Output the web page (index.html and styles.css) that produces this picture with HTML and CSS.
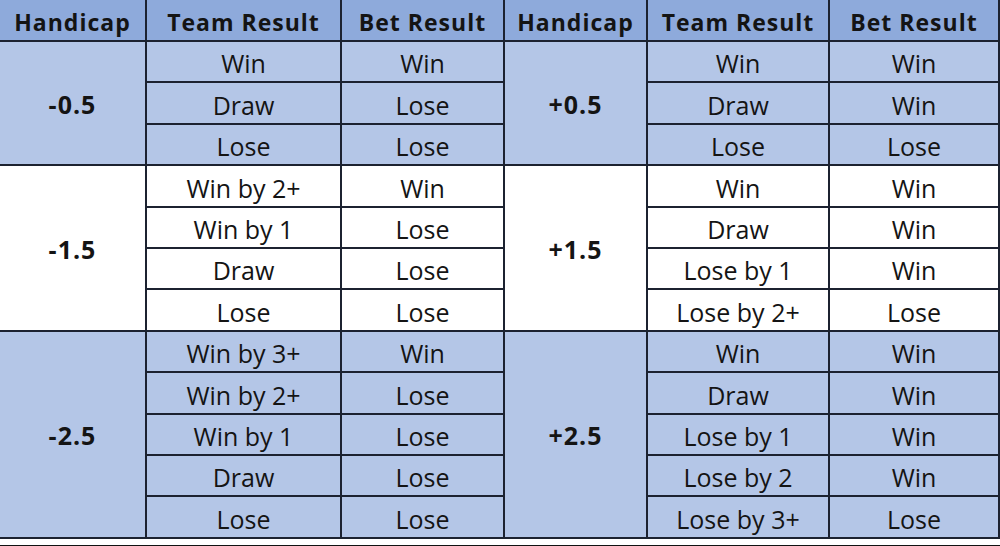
FILE: index.html
```html
<!DOCTYPE html>
<html>
<head>
<meta charset="utf-8">
<link rel="stylesheet" href="styles.css">
</head>
<body>
<table class="hc">
  <colgroup>
    <col class="c1"><col class="c2"><col class="c3"><col class="c4"><col class="c5"><col class="c6">
  </colgroup>
  <thead>
    <tr class="head">
      <th>Handicap</th><th>Team Result</th><th>Bet Result</th><th>Handicap</th><th>Team Result</th><th>Bet Result</th>
    </tr>
  </thead>
  <tbody class="band blue">
    <tr><td rowspan="3" class="hv">-0.5</td><td>Win</td><td>Win</td><td rowspan="3" class="hv">+0.5</td><td>Win</td><td>Win</td></tr>
    <tr><td>Draw</td><td>Lose</td><td>Draw</td><td>Win</td></tr>
    <tr><td>Lose</td><td>Lose</td><td>Lose</td><td>Lose</td></tr>
  </tbody>
  <tbody class="band white">
    <tr><td rowspan="4" class="hv">-1.5</td><td>Win by 2+</td><td>Win</td><td rowspan="4" class="hv">+1.5</td><td>Win</td><td>Win</td></tr>
    <tr><td>Win by 1</td><td>Lose</td><td>Draw</td><td>Win</td></tr>
    <tr><td>Draw</td><td>Lose</td><td>Lose by 1</td><td>Win</td></tr>
    <tr><td>Lose</td><td>Lose</td><td>Lose by 2+</td><td>Lose</td></tr>
  </tbody>
  <tbody class="band blue">
    <tr><td rowspan="5" class="hv">-2.5</td><td>Win by 3+</td><td>Win</td><td rowspan="5" class="hv">+2.5</td><td>Win</td><td>Win</td></tr>
    <tr><td>Win by 2+</td><td>Lose</td><td>Draw</td><td>Win</td></tr>
    <tr><td>Win by 1</td><td>Lose</td><td>Lose by 1</td><td>Win</td></tr>
    <tr><td>Draw</td><td>Lose</td><td>Lose by 2</td><td>Win</td></tr>
    <tr><td>Lose</td><td>Lose</td><td>Lose by 3+</td><td>Lose</td></tr>
  </tbody>
</table>
<div class="rule"></div>
</body>
</html>
```
FILE: styles.css
```css
html, body {
  margin: 0;
  padding: 0;
  background: #ffffff;
}
body {
  font-family: "Open Sans", "Liberation Sans", sans-serif;
  color: #141414;
}
.hc {
  border-collapse: collapse;
  table-layout: fixed;
  width: 999px;
}
.c1 { width: 146px; }
.c2 { width: 195px; }
.c3 { width: 163px; }
.c4 { width: 143px; }
.c5 { width: 182px; }
.c6 { width: 170px; }
.hc th, .hc td {
  border: 2px solid #1c2230;
  text-align: center;
  padding: 0;
  white-space: nowrap;
  overflow: hidden;
}
.head th {
  background: #8eaadb;
  font-weight: 700;
  font-size: 23px;
  letter-spacing: 1px;
  height: 38px;
  vertical-align: bottom;
  padding-bottom: 2px;
  border-top: none;
}
.head th:first-child { border-left: none; }
.hc td {
  font-size: 25px;
  height: 38.4px;
  line-height: 34px;
  vertical-align: bottom;
  padding-bottom: 1px;
}
.band.blue td { background: #b4c6e7; }
.band.white td { background: #ffffff; }
.hc td.hv {
  font-weight: 700;
  letter-spacing: 1px;
  vertical-align: middle;
  padding-top: 2px;
  padding-bottom: 0;
}
.hc tbody tr > td.hv:first-child { border-left: none; }
.rule {
  margin-top: 6px;
  height: 2px;
  background: #111111;
}
```
